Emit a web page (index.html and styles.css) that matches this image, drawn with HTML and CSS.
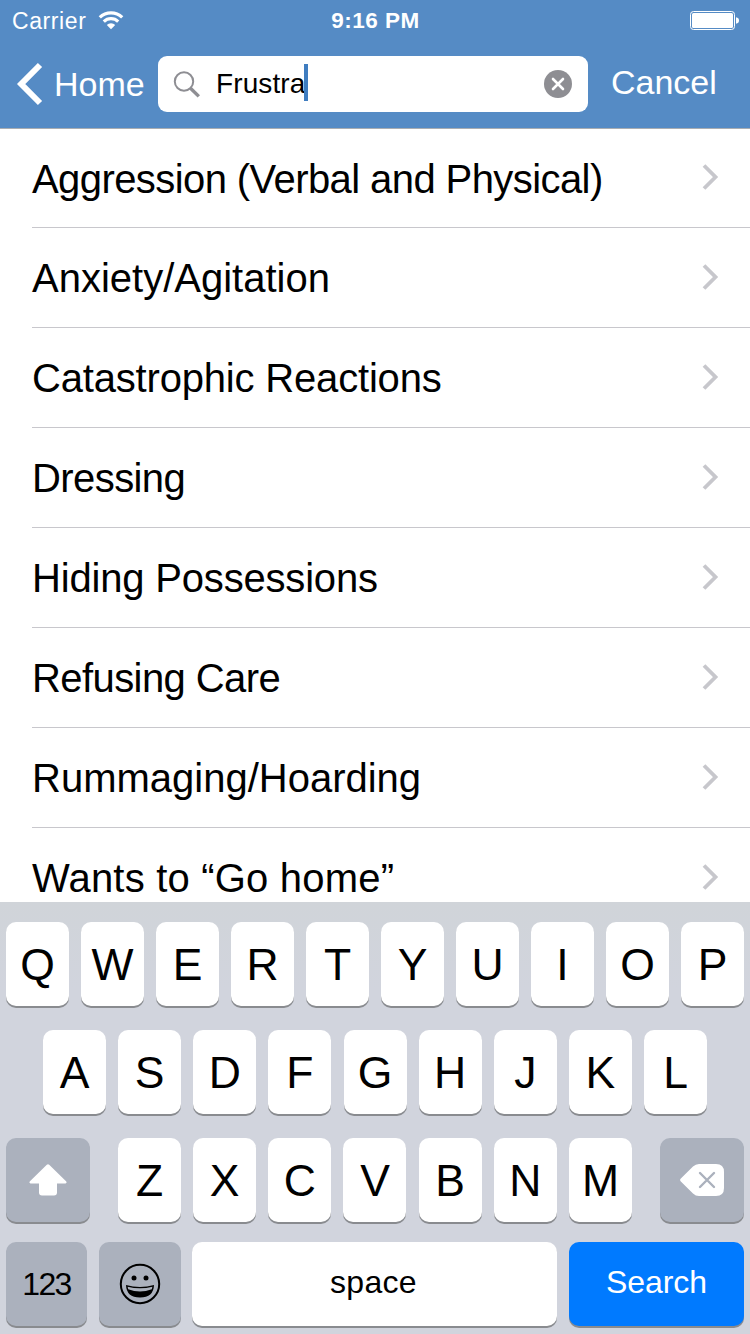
FILE: index.html
```
<!DOCTYPE html>
<html lang="en">
<head>
<meta charset="utf-8">
<title>Behaviors</title>
<link rel="stylesheet" href="styles.css">
</head>
<body>
<div class="screen">
  <header class="header">
    <div class="status">
      <div class="carrier"><span>Carrier</span>
        <svg class="wifi" width="26" height="20" viewBox="0 0 26 20" fill="none" stroke="#fff" stroke-width="3.2"><path d="M1.8 7.400a16 16 0 0 1 22.400 0M5.800 11.600a10.400 10.400 0 0 1 14.400 0"/><path d="M13 19.200l-4.200-4.200a6 6 0 0 1 8.400 0z" fill="#fff" stroke="none"/></svg>
      </div>
      <span class="time">9:16 PM</span>
      <svg class="battery" width="50" height="20" viewBox="0 0 50 20"><rect x=".5" y=".5" width="44" height="18" rx="3" fill="none" stroke="#fff"/><rect x="2" y="2" width="41" height="15" rx="1.5" fill="#fff"/><path d="M46 6.2q3 .6 3 3.300t-3 3.300z" fill="#fff"/></svg>
    </div>
    <nav class="nav">
      <a class="back"><svg width="28" height="44" viewBox="0 0 28 44" fill="none" stroke="#fff" stroke-width="6"><path d="M24 3L5.200 22 24 41"/></svg><span>Home</span></a>
      <div class="search">
        <svg class="glass" width="28" height="28" viewBox="0 0 28 28" fill="none" stroke="#8e8e93"><circle cx="11" cy="10.5" r="9.200" stroke-width="2"/><path d="M17.500 17.200l8.300 8.200" stroke-width="3.400"/></svg>
        <span class="query">Frustra</span><i class="caret"></i>
        <svg class="clear" width="28" height="28" viewBox="0 0 28 28"><circle cx="14" cy="14" r="14" fill="#8e8e93"/><path d="M9 9l10 10M19 9L9 19" stroke="#fff" stroke-width="2.600" stroke-linecap="round"/></svg>
      </div>
      <span class="cancel">Cancel</span>
    </nav>
  </header>
  <ul class="list">
    <li class="item"><span class="tight">Aggression (Verbal and Physical)</span><svg class="chev" viewBox="0 0 18 28"><path d="M3 2.500L14.500 14 3 25.500"/></svg></li>
    <li class="item"><span>Anxiety/Agitation</span><svg class="chev" viewBox="0 0 18 28"><path d="M3 2.500L14.500 14 3 25.500"/></svg></li>
    <li class="item"><span class="snug">Catastrophic Reactions</span><svg class="chev" viewBox="0 0 18 28"><path d="M3 2.500L14.500 14 3 25.500"/></svg></li>
    <li class="item"><span class="tight">Dressing</span><svg class="chev" viewBox="0 0 18 28"><path d="M3 2.500L14.500 14 3 25.500"/></svg></li>
    <li class="item"><span class="snug">Hiding Possessions</span><svg class="chev" viewBox="0 0 18 28"><path d="M3 2.500L14.500 14 3 25.500"/></svg></li>
    <li class="item"><span class="tight">Refusing Care</span><svg class="chev" viewBox="0 0 18 28"><path d="M3 2.500L14.500 14 3 25.500"/></svg></li>
    <li class="item"><span>Rummaging/Hoarding</span><svg class="chev" viewBox="0 0 18 28"><path d="M3 2.500L14.500 14 3 25.500"/></svg></li>
    <li class="item"><span class="loose">Wants to “Go home”</span><svg class="chev" viewBox="0 0 18 28"><path d="M3 2.500L14.500 14 3 25.500"/></svg></li>
  </ul>
  <div class="keyboard">
    <div class="keys">
      <b class="key">Q</b><b class="key">W</b><b class="key">E</b><b class="key">R</b><b class="key">T</b><b class="key">Y</b><b class="key">U</b><b class="key">I</b><b class="key">O</b><b class="key">P</b>
    </div>
    <div class="keys middle">
      <b class="key">A</b><b class="key">S</b><b class="key">D</b><b class="key">F</b><b class="key">G</b><b class="key">H</b><b class="key">J</b><b class="key">K</b><b class="key">L</b>
    </div>
    <div class="keys">
      <b class="key dark wide"><svg width="40" height="34" viewBox="0 0 40 34" fill="#fff"><path d="M18.800 1.800q1.200-1 2.400 0L38.300 18.600q1 1.600-.8 2H29v9q0 3-3 3H14q-3 0-3-3v-9H2.500q-1.800-.4-.8-2z"/></svg></b>
      <div class="letters"><b class="key">Z</b><b class="key">X</b><b class="key">C</b><b class="key">V</b><b class="key">B</b><b class="key">N</b><b class="key">M</b></div>
      <b class="key dark wide"><svg width="44" height="32" viewBox="0 0 44 32"><path d="M.6 17.200q-1-1.200 0-2.400L13 2.600Q15.600 0 19 0h17q8 0 8 8v16q0 8-8 8H19q-3.400 0-6-2.600z" fill="#fff"/><path d="M20 9l14 14M34 9L20 23" stroke="#abb1bd" stroke-width="2.400" stroke-linecap="round"/></svg></b>
    </div>
    <div class="keys bottom">
      <b class="key dark num"><span>123</span></b>
      <b class="key dark emoji"><svg width="42" height="42" viewBox="0 0 42 42"><circle cx="21" cy="21" r="19.200" fill="none" stroke="#000" stroke-width="2"/><circle cx="15" cy="15" r="2.500"/><circle cx="27" cy="15" r="2.500"/><path d="M7 22q14 4 28 0Q34.500 34.500 21 34.500T7 22z"/><path d="M8.600 23.800q12.400 3 24.800 0l-.6 2.400q-11.800 4.400-23.600 0z" fill="#abb1bd"/></svg></b>
      <b class="key space"><span>space</span></b>
      <b class="key go"><span>Search</span></b>
    </div>
  </div>
</div>
</body>
</html>
```
FILE: styles.css
```
* { box-sizing: border-box; }
body { margin: 0; font-family: "Liberation Sans", Arial, sans-serif; color: #000; background: #fff; }
svg { display: block; flex: none; }
.screen { width: 750px; height: 1334px; display: flex; flex-direction: column; overflow: hidden; }
.header { height: 129px; flex: none; background: #558bc5; border-bottom: 1px solid #a9adb2; color: #fff; }
.status { height: 40px; display: grid; grid-template-columns: 1fr auto 1fr; align-items: center; padding: 0 10px 0 12px; font-size: 23px; }
.carrier { display: flex; align-items: center; gap: 12px; letter-spacing: .6px; padding-top: 2px; }
.wifi { margin-top: -2px; }
.time { font-weight: 700; font-size: 22.5px; letter-spacing: .5px; padding-top: 2px; margin-left: -1px; }
.battery { justify-self: end; margin-top: 2px; }
.nav { height: 88px; display: flex; align-items: center; }
.back { display: flex; align-items: center; width: 158px; padding-left: 16px; font-size: 34px; }
.back span { margin-left: 10px; padding-top: 1px; }
.search { width: 430px; height: 56px; border-radius: 9px; background: #fff; color: #000; display: flex; align-items: center; padding: 0 16px 0 15px; font-size: 28px; }
.glass { margin-top: 2px; }
.query { margin-left: 15px; letter-spacing: .1px; }
.caret { width: 4px; height: 37px; margin-top: -3px; margin-left: -1px; background: #3f7dc0; }
.clear { margin-left: auto; }
.cancel { margin-left: 23px; font-size: 34px; margin-top: -4px; }
.list { margin: 0; padding: 0; list-style: none; height: 773px; overflow: hidden; flex: none; }
.item { height: 100px; margin-left: 32px; padding-right: 31px; border-bottom: 1px solid #c8c7cc; display: flex; align-items: center; justify-content: space-between; font-size: 40px; white-space: nowrap; }
.item:first-child { height: 99px; }
.item span { padding-top: 2px; }
.item .tight { letter-spacing: -.58px; }
.item .snug { letter-spacing: -.18px; }
.item .loose { letter-spacing: .2px; }
.chev { width: 18px; height: 28px; fill: none; stroke: #c7c7cc; stroke-width: 3.8; margin-top: -2px; }
.keyboard { height: 432px; flex: none; background: linear-gradient(#d0d4d9, #d1d4dd 20%); padding: 20px 6px 0; display: flex; flex-direction: column; gap: 24px; }
.keys { display: flex; justify-content: space-between; height: 84px; flex: none; }
.middle { padding: 0 37px; }
.letters { display: flex; justify-content: space-between; width: 514px; }
.key { width: 63px; height: 84px; border-radius: 10px; background: #fff; box-shadow: 0 2px 0 #898b8f; display: flex; align-items: center; justify-content: center; padding-top: 2px; font-size: 44.5px; font-weight: 400; }
.dark { background: #abb1bd; padding-top: 0; }
.wide { width: 84px; }
.bottom { margin-top: -4px; }
.num { width: 81px; font-size: 32px; letter-spacing: -1.6px; }
.emoji { width: 82px; }
.space { width: 365px; font-size: 32px; letter-spacing: .3px; margin-left: -1px; padding: 0 2px 4px 0; }
.go { width: 175px; font-size: 32px; letter-spacing: -.1px; background: #007aff; color: #fff; padding: 0 0 4px; }
```
